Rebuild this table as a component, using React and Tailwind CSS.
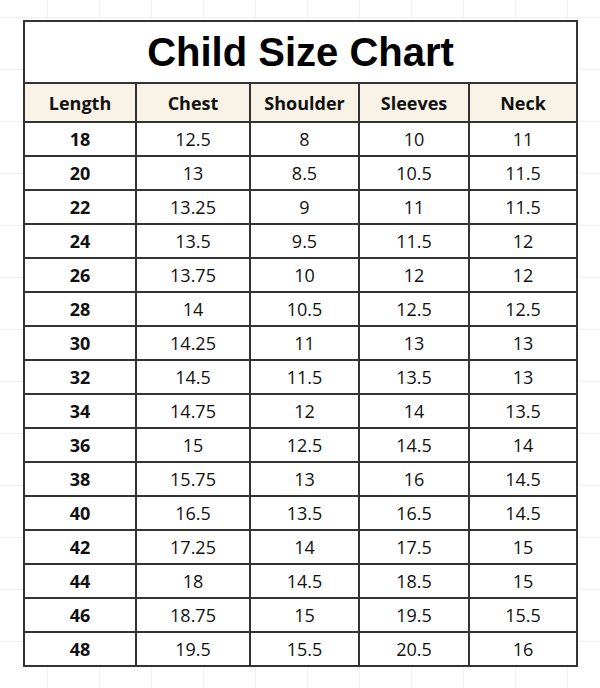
const cols = ['Length', 'Chest', 'Shoulder', 'Sleeves', 'Neck'];

const rows = [
  ['18', '12.5', '8', '10', '11'],
  ['20', '13', '8.5', '10.5', '11.5'],
  ['22', '13.25', '9', '11', '11.5'],
  ['24', '13.5', '9.5', '11.5', '12'],
  ['26', '13.75', '10', '12', '12'],
  ['28', '14', '10.5', '12.5', '12.5'],
  ['30', '14.25', '11', '13', '13'],
  ['32', '14.5', '11.5', '13.5', '13'],
  ['34', '14.75', '12', '14', '13.5'],
  ['36', '15', '12.5', '14.5', '14'],
  ['38', '15.75', '13', '16', '14.5'],
  ['40', '16.5', '13.5', '16.5', '14.5'],
  ['42', '17.25', '14', '17.5', '15'],
  ['44', '18', '14.5', '18.5', '15'],
  ['46', '18.75', '15', '19.5', '15.5'],
  ['48', '19.5', '15.5', '20.5', '16'],
];

export default function App() {
  return (
    <div className="w-[600px] h-[688px] bg-white bg-[linear-gradient(to_right,#f1f1f1_1px,transparent_1px),linear-gradient(to_bottom,#f1f1f1_1px,transparent_1px)] bg-[size:52px_52px] bg-[position:47px_17px] pt-[20px] pl-[23px] font-['Open_Sans',sans-serif] text-[#111]">
      <table className="border-collapse w-[553px] bg-white table-fixed">
        <colgroup>
          <col className="w-[112px]" />
          <col className="w-[114px]" />
          <col className="w-[109px]" />
          <col className="w-[110px]" />
          <col className="w-[108px]" />
        </colgroup>
        <thead>
          <tr>
            <th colSpan={5} className="h-[62px] border-2 border-[#333] font-['Liberation_Sans',Arial,sans-serif] text-[40px] font-bold text-black leading-none">
              Child Size Chart
            </th>
          </tr>
          <tr className="bg-[#f8f3e6]">
            {cols.map((c) => (
              <th key={c} className="h-[39px] border-2 border-[#333] text-[18px] font-bold leading-none">
                {c}
              </th>
            ))}
          </tr>
        </thead>
        <tbody>
          {rows.map((r) => (
            <tr key={r[0]}>
              {r.map((v, i) => (
                <td
                  key={i}
                  className={`h-[34px] border-2 border-[#333] text-center text-[18px] leading-none ${i === 0 ? 'font-bold' : ''}`}
                >
                  {v}
                </td>
              ))}
            </tr>
          ))}
        </tbody>
      </table>
    </div>
  );
}
